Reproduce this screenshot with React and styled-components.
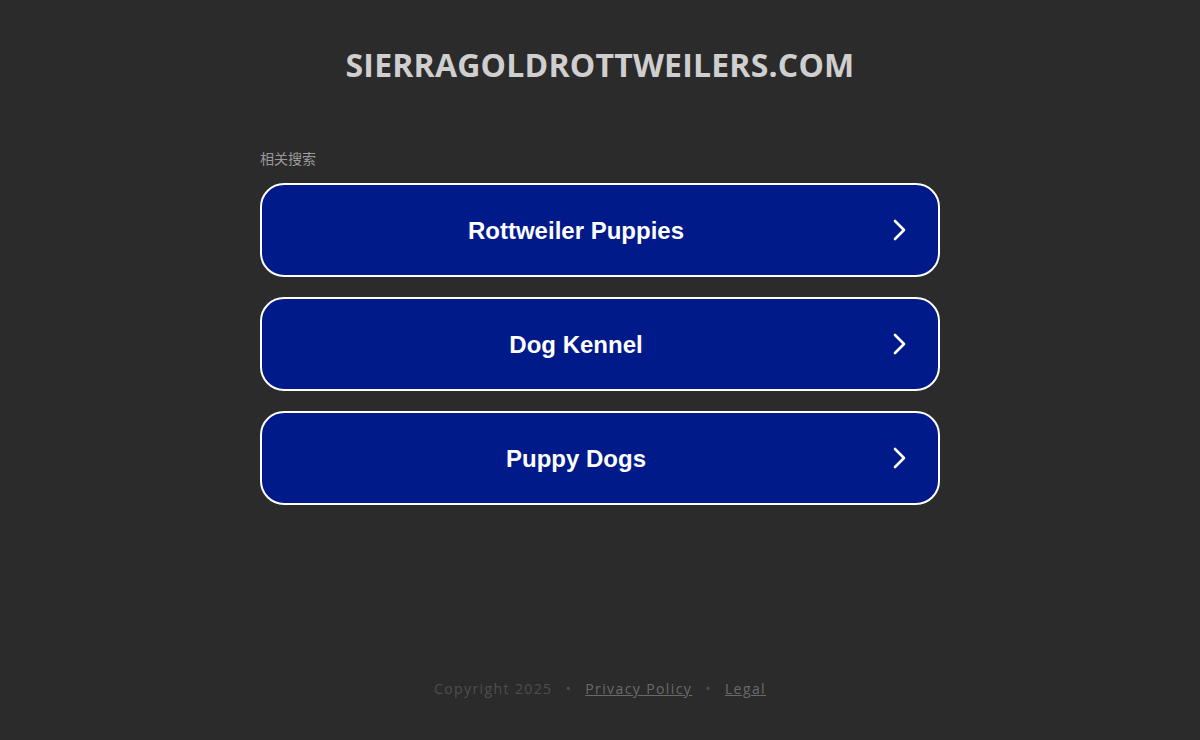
import React from "react";
import styled, { createGlobalStyle } from "styled-components";

const Global = createGlobalStyle`
  html, body { margin: 0; padding: 0; background: #2b2b2b; }
  body { font-family: "Open Sans", "Noto Sans", sans-serif; }
`;

const Page = styled.div`
  min-height: 740px;
  display: flex;
  flex-direction: column;
  align-items: center;
`;

const Title = styled.h1`
  margin: 44px 0 0;
  font-family: "Open Sans", sans-serif;
  font-weight: 700;
  font-size: 32px;
  line-height: 42px;
  color: #cfcfcf;
  letter-spacing: 0.2px;
`;

const Section = styled.div`
  width: 680px;
  margin-top: 63px;
  display: flex;
  flex-direction: column;
`;

const Label = styled.div`
  font-family: "Noto Sans CJK SC", sans-serif;
  font-size: 14px;
  line-height: 18px;
  color: #9a9a9a;
  margin-bottom: 16px;
`;

const List = styled.div`
  display: flex;
  flex-direction: column;
  gap: 20px;
`;

const Item = styled.a`
  box-sizing: border-box;
  height: 94px;
  border: 2px solid #ffffff;
  border-radius: 24px;
  background: #011a8a;
  display: flex;
  align-items: center;
  justify-content: center;
  padding: 2px 48px 0 0;
  position: relative;
  text-decoration: none;
  font-family: "Liberation Sans", Arial, sans-serif;
  font-weight: 700;
  font-size: 24px;
  color: #ffffff;
`;

const Chevron = styled.svg`
  position: absolute;
  right: 30px;
  top: 50%;
  transform: translateY(-50%);
`;

const Footer = styled.div`
  margin-top: auto;
  margin-bottom: 42px;
  font-family: "Open Sans", sans-serif;
  font-size: 14px;
  letter-spacing: 1.4px;
  color: #4e4e4e;
  display: flex;
  gap: 13px;
  align-items: center;
`;

const FooterLink = styled.a`
  color: #6a6a6a;
  text-decoration: underline;
`;

const items = ["Rottweiler Puppies", "Dog Kennel", "Puppy Dogs"];

export default function App() {
  return (
    <>
      <Global />
      <Page>
        <Title>SIERRAGOLDROTTWEILERS.COM</Title>
        <Section>
          <Label>相关搜索</Label>
          <List>
            {items.map((t) => (
              <Item key={t} href="#">
                {t}
                <Chevron width="16" height="24" viewBox="0 0 16 24">
                  <path d="M3 3 L12 12 L3 21" fill="none" stroke="#fff" strokeWidth="2.6" strokeLinecap="round" strokeLinejoin="round" />
                </Chevron>
              </Item>
            ))}
          </List>
        </Section>
        <Footer>
          <span>Copyright 2025</span>
          <span>•</span>
          <FooterLink href="#">Privacy Policy</FooterLink>
          <span>•</span>
          <FooterLink href="#">Legal</FooterLink>
        </Footer>
      </Page>
    </>
  );
}
